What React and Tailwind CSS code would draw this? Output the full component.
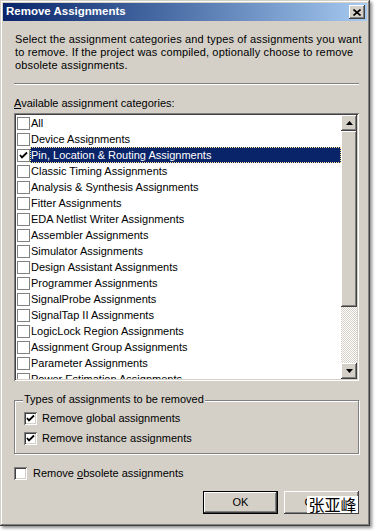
import React from "react";

const categories = [
  "All",
  "Device Assignments",
  "Pin, Location & Routing Assignments",
  "Classic Timing Assignments",
  "Analysis & Synthesis Assignments",
  "Fitter Assignments",
  "EDA Netlist Writer Assignments",
  "Assembler Assignments",
  "Simulator Assignments",
  "Design Assistant Assignments",
  "Programmer Assignments",
  "SignalProbe Assignments",
  "SignalTap II Assignments",
  "LogicLock Region Assignments",
  "Assignment Group Assignments",
  "Parameter Assignments",
  "Power Estimation Assignments",
];

// classic 3d edges
const raised = "shadow-[inset_-1px_-1px_#404040,inset_1px_1px_#ffffff,inset_-2px_-2px_#808080]";
const sunken = "shadow-[inset_1px_1px_#808080,inset_-1px_-1px_#ffffff,inset_2px_2px_#404040,inset_-2px_-2px_#d4d0c8]";

function Check({ className = "" }) {
  return (
    <svg width="9" height="9" viewBox="0 0 9 9" className={className}>
      <path d="M1 4 L3 6.5 L8 1.5" fill="none" stroke="#000" strokeWidth="1.8" />
    </svg>
  );
}

function ListCheckbox({ checked }) {
  return (
    <div className="w-[13px] h-[13px] border border-[#808080] bg-white flex items-center justify-center shrink-0">
      {checked && <Check />}
    </div>
  );
}

function ClassicCheckbox({ checked }) {
  return (
    <div className={`w-[13px] h-[13px] bg-white flex items-center justify-center shrink-0 ${sunken}`}>
      {checked && <Check />}
    </div>
  );
}

function Arrow({ up }) {
  return (
    <svg width="7" height="4" viewBox="0 0 7 4">
      <path d={up ? "M0 4 L3.5 0 L7 4 Z" : "M0 0 L3.5 4 L7 0 Z"} fill="#000" />
    </svg>
  );
}

export default function App() {
  return (
    <div className="w-[376px] h-[531px] bg-white overflow-hidden text-[11px] text-black" style={{ fontFamily: '"Liberation Sans", Arial, sans-serif' }}>
      <div className="w-[370px] h-[526px] bg-[#d4d0c8] flex flex-col shadow-[inset_-1px_-1px_#404040,inset_1px_1px_#d4d0c8,inset_-2px_-2px_#808080,inset_2px_2px_#ffffff,2px_2px_3px_rgba(0,0,0,0.45)]">
        {/* title bar */}
        <div className="mx-[3px] mt-[3px] h-[18px] bg-gradient-to-r from-[#0a246a] to-[#a6caf0] flex items-center justify-between pl-[3px] pr-[2px]">
          <span className="text-white font-bold text-[11.5px]">Remove Assignments</span>
          <div className={`w-[16px] h-[14px] bg-[#d4d0c8] flex items-center justify-center ${raised}`}>
            <svg width="8" height="7" viewBox="0 0 8 7">
              <path d="M0.5 0.5 L7.5 6.5 M7.5 0.5 L0.5 6.5" stroke="#000" strokeWidth="1.6" />
            </svg>
          </div>
        </div>

        <div className="flex flex-col pl-[14px] pr-[11px]">
          <p className="mt-[12px] pl-[1px] leading-[13px] w-[350px] tracking-[0.15px]">
            Select the assignment categories and types of assignments you want to remove. If the project was compiled, optionally choose to remove obsolete assignments.
          </p>

          <div className="mt-[11px] h-[2px] border-t border-[#808080] border-b border-b-white w-[345px]" />

          <div className="mt-[12px] leading-[13px]">
            <span className="underline">A</span>vailable assignment categories:
          </div>

          {/* list box */}
          <div className={`mt-[3px] w-[345px] h-[268px] bg-white p-[2px] flex ${sunken}`}>
            <div className="flex-1 overflow-hidden bg-white">
              {categories.map((c, i) => {
                const sel = i === 2;
                return (
                  <div key={c} className="h-[16px] flex items-center pl-[1px]">
                    <ListCheckbox checked={sel} />
                    <div
                      className={`h-[16px] flex-1 flex items-center pl-[1px] whitespace-nowrap ${
                        sel ? "bg-[#0a246a] text-white outline-1 outline-dotted outline-[#ffe08a] -outline-offset-1" : ""
                      }`}
                    >
                      {c}
                    </div>
                  </div>
                );
              })}
            </div>
            {/* scrollbar */}
            <div className="w-[16px] flex flex-col">
              <div className={`h-[16px] bg-[#d4d0c8] flex items-center justify-center ${raised}`}>
                <Arrow up />
              </div>
              <div className={`h-[176px] bg-[#d4d0c8] ${raised}`} />
              <div className="flex-1 bg-[repeating-conic-gradient(#ffffff_0%_25%,#d4d0c8_0%_50%)] bg-[length:2px_2px]" />
              <div className={`h-[16px] bg-[#d4d0c8] flex items-center justify-center ${raised}`}>
                <Arrow />
              </div>
            </div>
          </div>

          {/* group box */}
          <div className="relative mt-[19px] w-[345px] h-[54px] border border-[#808080] shadow-[1px_1px_#ffffff,inset_1px_1px_#ffffff]">
            <span className="absolute left-[8px] -top-[8px] px-[1px] bg-[#d4d0c8] leading-[13px]">Types of assignments to be removed</span>
            <div className="flex flex-col pt-[11px] pl-[9px] gap-[7px]">
              <div className="flex items-center gap-[5px] h-[13px]">
                <ClassicCheckbox checked />
                <span>Remove global assignments</span>
              </div>
              <div className="flex items-center gap-[5px] h-[13px]">
                <ClassicCheckbox checked />
                <span>Remove instance assignments</span>
              </div>
            </div>
          </div>

          <div className="mt-[13px] flex items-center gap-[6px] h-[13px]">
            <ClassicCheckbox />
            <span>
              Remove <span className="underline">o</span>bsolete assignments
            </span>
          </div>

          {/* buttons */}
          <div className="mt-[11px] flex justify-end gap-[6px]">
            <div className="w-[75px] h-[23px] border border-black bg-[#d4d0c8] shadow-[inset_-1px_-1px_#404040,inset_1px_1px_#ffffff,inset_-2px_-2px_#808080] flex items-center justify-center">
              OK
            </div>
            <div className={`relative w-[75px] h-[23px] bg-[#d4d0c8] flex items-center justify-center ${raised}`}>
              Cancel
              <div
                className="absolute left-[23px] top-[5px] w-[51px] h-[17px] bg-white flex items-center justify-center text-[16px] leading-[17px]"
                style={{ fontFamily: '"Noto Sans CJK SC", sans-serif' }}
              >
                张亚峰
              </div>
            </div>
          </div>
        </div>
      </div>
    </div>
  );
}
